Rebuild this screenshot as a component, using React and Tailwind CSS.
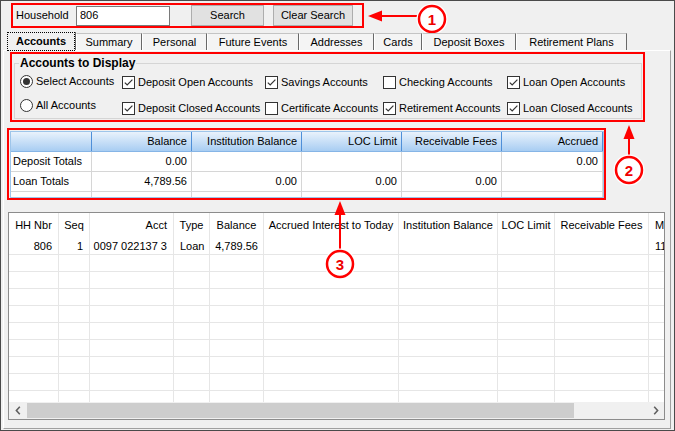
import React from "react";

function Check({ checked }) {
  return (
    <span className="w-[13px] h-[13px] border border-[#333333] bg-white flex items-center justify-center shrink-0">
      {checked && (
        <svg width="11" height="11" viewBox="0 0 11 11">
          <path d="M1.8 5.6 L4.2 8 L9.4 2.6" fill="none" stroke="#333333" strokeWidth="1.2" />
        </svg>
      )}
    </span>
  );
}

function Radio({ checked }) {
  return (
    <span className="w-[13px] h-[13px] rounded-full border border-[#333333] bg-white flex items-center justify-center shrink-0">
      {checked && <span className="w-[7px] h-[7px] rounded-full bg-[#333333]" />}
    </span>
  );
}

const tabs = [
  { t: "Summary", w: "w-[66px]" },
  { t: "Personal", w: "w-[65px]" },
  { t: "Future Events", w: "w-[92px]" },
  { t: "Addresses", w: "w-[75px]" },
  { t: "Cards", w: "w-[48px]" },
  { t: "Deposit Boxes", w: "w-[94px]" },
  { t: "Retirement Plans", w: "w-[111px]" },
];

const checks = [
  { t: "Deposit Open Accounts", c: true },
  { t: "Savings Accounts", c: true },
  { t: "Checking Accounts", c: false },
  { t: "Loan Open Accounts", c: true },
  { t: "Deposit Closed Accounts", c: true },
  { t: "Certificate Accounts", c: false },
  { t: "Retirement Accounts", c: true },
  { t: "Loan Closed Accounts", c: true },
];

const totCols = [
  { h: "", w: "w-[81px]" },
  { h: "Balance", w: "w-[100px]" },
  { h: "Institution Balance", w: "w-[110px]" },
  { h: "LOC Limit", w: "w-[100px]" },
  { h: "Receivable Fees", w: "w-[100px]" },
  { h: "Accrued", w: "w-[101px]" },
];

const totRows = [
  ["Deposit Totals", "0.00", "", "", "", "0.00"],
  ["Loan Totals", "4,789.56", "0.00", "0.00", "0.00", ""],
];

const cols = [
  { h: "HH Nbr", w: "w-[50px]", ha: "justify-center", v: "806", va: "justify-end pr-[6px]" },
  { h: "Seq", w: "w-[31px]", ha: "justify-center", v: "1", va: "justify-end pr-[6px]" },
  { h: "Acct", w: "w-[84px]", ha: "justify-end pr-[6px]", v: "0097 022137 3", va: "justify-end pr-[6px]" },
  { h: "Type", w: "w-[36px]", ha: "justify-center", v: "Loan", va: "justify-start pl-[6px]" },
  { h: "Balance", w: "w-[54px]", ha: "justify-center", v: "4,789.56", va: "justify-end pr-[5px]" },
  { h: "Accrued Interest to Today", w: "w-[135px]", ha: "justify-center", v: "", va: "" },
  { h: "Institution Balance", w: "w-[99px]", ha: "justify-center", v: "", va: "" },
  { h: "LOC Limit", w: "w-[57px]", ha: "justify-center", v: "", va: "" },
  { h: "Receivable Fees", w: "w-[94px]", ha: "justify-center", v: "", va: "" },
  { h: "M", w: "w-[60px]", ha: "justify-start pl-[6px]", v: "11", va: "justify-start pl-[6px]" },
];

export default function App() {
  return (
    <div className="relative w-[675px] h-[431px] overflow-hidden bg-[#f0f0f0] border border-[#4a4a4a] text-[11px] leading-none text-black font-['Liberation_Sans',Arial,sans-serif]">
      {/* Search row */}
      <div className="ml-[10px] mt-[2px] w-[353px] h-[25px] border-2 border-[#ff0000] flex items-center">
        <span className="ml-[3px] w-[60px]">Household</span>
        <div className="w-[94px] h-[20px] bg-white border border-[#7a7a7a] flex items-center pl-[3px]">806</div>
        <button className="ml-[21px] w-[73px] h-[21px] bg-[#e1e1e1] border border-[#adadad] flex items-center justify-center">
          Search
        </button>
        <button className="ml-[9px] w-[80px] h-[21px] bg-[#e1e1e1] border border-[#adadad] flex items-center justify-center">
          Clear Search
        </button>
      </div>

      {/* Tabs */}
      <div className="ml-[6px] mt-[4px] h-[18px] flex items-end relative z-10">
        <div className="w-[68px] h-[19px] -mb-px border border-dotted border-black bg-[#f0f0f0] font-bold flex items-center justify-center">
          Accounts
        </div>
        <div className="w-px h-[18px] bg-[#696969] self-start" />
        {tabs.map((t) => (
          <div
            key={t.t}
            className={`${t.w} h-[17px] border-t border-l border-r border-t-[#c4c4c4] border-l-[#ffffff] border-r-[#696969] bg-[#f4f4f4] flex items-center justify-center`}
          >
            {t.t}
          </div>
        ))}
      </div>

      {/* Panel */}
      <div className="ml-[2px] w-[668px] h-[379px] border-t border-l border-r border-b border-t-[#ffffff] border-l-[#ffffff] border-r-[#a0a0a0] border-b-[#a0a0a0] flex flex-col">
        {/* Accounts to display */}
        <div className="ml-[6px] mt-[1px] w-[635px] h-[70px] border-2 border-[#ff0000] shrink-0">
          <fieldset className="ml-[2px] mr-[1px] mt-[2px] h-[63px] border border-[#d5d5d5] px-[4px] min-w-0">
            <legend className="px-[1px] text-[12px] font-bold leading-[15px]">Accounts to Display</legend>
            <div className="flex ml-[1px]">
              <div className="w-[103px] flex flex-col">
                <div className="mt-[2px] h-[16px] flex items-center gap-[3px]">
                  <Radio checked />
                  <span>Select Accounts</span>
                </div>
                <div className="mt-[8px] h-[16px] flex items-center gap-[3px]">
                  <Radio />
                  <span>All Accounts</span>
                </div>
              </div>
              <div className="grid grid-cols-[143px_118px_124px_130px] gap-y-[10px] mt-[3px]">
                {checks.map((c) => (
                  <div key={c.t} className="h-[16px] flex items-center gap-[3px] whitespace-nowrap">
                    <Check checked={c.c} />
                    <span>{c.t}</span>
                  </div>
                ))}
              </div>
            </div>
          </fieldset>
        </div>

        {/* Totals grid */}
        <div className="ml-[3px] mt-[6px] w-[599px] h-[72px] border-2 border-[#ff0000] shrink-0">
          <div className="ml-[1px] mt-[1px] w-[594px] h-[67px] border border-[#9ec5ea] bg-white overflow-hidden">
            <div className="flex h-[20px] bg-linear-to-b from-[#e9f2fc] to-[#a8cdf2] border-b border-b-[#86b5e6]">
              {totCols.map((c, i) => (
                <div
                  key={i}
                  className={`${c.w} h-full border-r border-r-[#4f8fd8] flex items-center justify-end pr-[4px] whitespace-nowrap`}
                >
                  {c.h}
                </div>
              ))}
            </div>
            {totRows.map((r, ri) => (
              <div key={ri} className="flex h-[20px] border-b border-b-[#d6d6d6]">
                {r.map((v, i) => (
                  <div
                    key={i}
                    className={`${totCols[i].w} h-full border-r border-r-[#d6d6d6] flex items-center whitespace-nowrap ${
                      i === 0 ? "justify-start pl-[2px]" : "justify-end pr-[4px]"
                    }`}
                  >
                    {v}
                  </div>
                ))}
              </div>
            ))}
            <div className="flex h-[5px]">
              {totCols.map((c, i) => (
                <div key={i} className={`${c.w} h-full border-r border-r-[#d6d6d6]`} />
              ))}
            </div>
          </div>
        </div>

        {/* Accounts list grid */}
        <div className="ml-[4px] mt-[12px] w-[657px] h-[208px] border border-[#8c8c8c] bg-white flex flex-col shrink-0 overflow-hidden">
          <div className="flex h-[25px] shrink-0">
            {cols.map((c) => (
              <div
                key={c.h}
                className={`${c.w} h-full shrink-0 border-r border-r-[#e6e6e6] flex items-center whitespace-nowrap ${c.ha}`}
              >
                {c.h}
              </div>
            ))}
          </div>
          <div className="flex-1 overflow-hidden">
            {Array.from({ length: 10 }).map((_, ri) => (
              <div key={ri} className="flex h-[17px]">
                {cols.map((c) => (
                  <div
                    key={c.h}
                    className={`${c.w} h-full shrink-0 border-r border-b border-[#e6e6e6] flex items-center whitespace-nowrap ${c.va}`}
                  >
                    {ri === 0 ? c.v : ""}
                  </div>
                ))}
              </div>
            ))}
          </div>
          <div className="h-[17px] shrink-0 flex bg-[#f0f0f0]">
            <div className="w-[17px] h-full flex items-center justify-center">
              <svg width="6" height="9" viewBox="0 0 6 9">
                <path d="M4.8 0.8 L1.4 4.5 L4.8 8.2" fill="none" stroke="#606060" strokeWidth="1.6" />
              </svg>
            </div>
            <div className="flex-1 h-full flex items-center">
              <div className="ml-[1px] w-[547px] h-[15px] bg-[#cdcdcd]" />
            </div>
            <div className="w-[17px] h-full flex items-center justify-center">
              <svg width="6" height="9" viewBox="0 0 6 9">
                <path d="M1.2 0.8 L4.6 4.5 L1.2 8.2" fill="none" stroke="#606060" strokeWidth="1.6" />
              </svg>
            </div>
          </div>
        </div>
      </div>

      {/* Annotation overlays */}
      <svg
        className="absolute left-[-1px] top-[-1px] pointer-events-none"
        width="675"
        height="431"
        viewBox="0 0 675 431"
      >
        <g stroke="#ff0000" strokeWidth="2" fill="#ff0000">
          <line x1="378" y1="16" x2="419" y2="16" />
          <polygon points="368,16 382,10.5 382,21.5" stroke="none" />
          <line x1="629" y1="138" x2="629" y2="157" />
          <polygon points="629,125 623.5,139 634.5,139" stroke="none" />
          <line x1="340" y1="213" x2="340" y2="251" />
          <polygon points="340,201 334.5,215 345.5,215" stroke="none" />
        </g>
        {[
          [432, 19, "1"],
          [629, 170, "2"],
          [340, 264, "3"],
        ].map(([cx, cy, n]) => (
          <g key={n}>
            <circle cx={cx} cy={cy} r="13.5" fill="#ffffff" stroke="#ffffff" strokeWidth="4" />
            <circle cx={cx} cy={cy} r="13" fill="#ffffff" stroke="#ff0000" strokeWidth="2.5" />
            <text
              x={cx}
              y={cy + 5.5}
              textAnchor="middle"
              fill="#ee0000"
              fontFamily="'Liberation Sans', Arial, sans-serif"
              fontWeight="bold"
              fontSize="15"
            >
              {n}
            </text>
          </g>
        ))}
      </svg>
    </div>
  );
}
